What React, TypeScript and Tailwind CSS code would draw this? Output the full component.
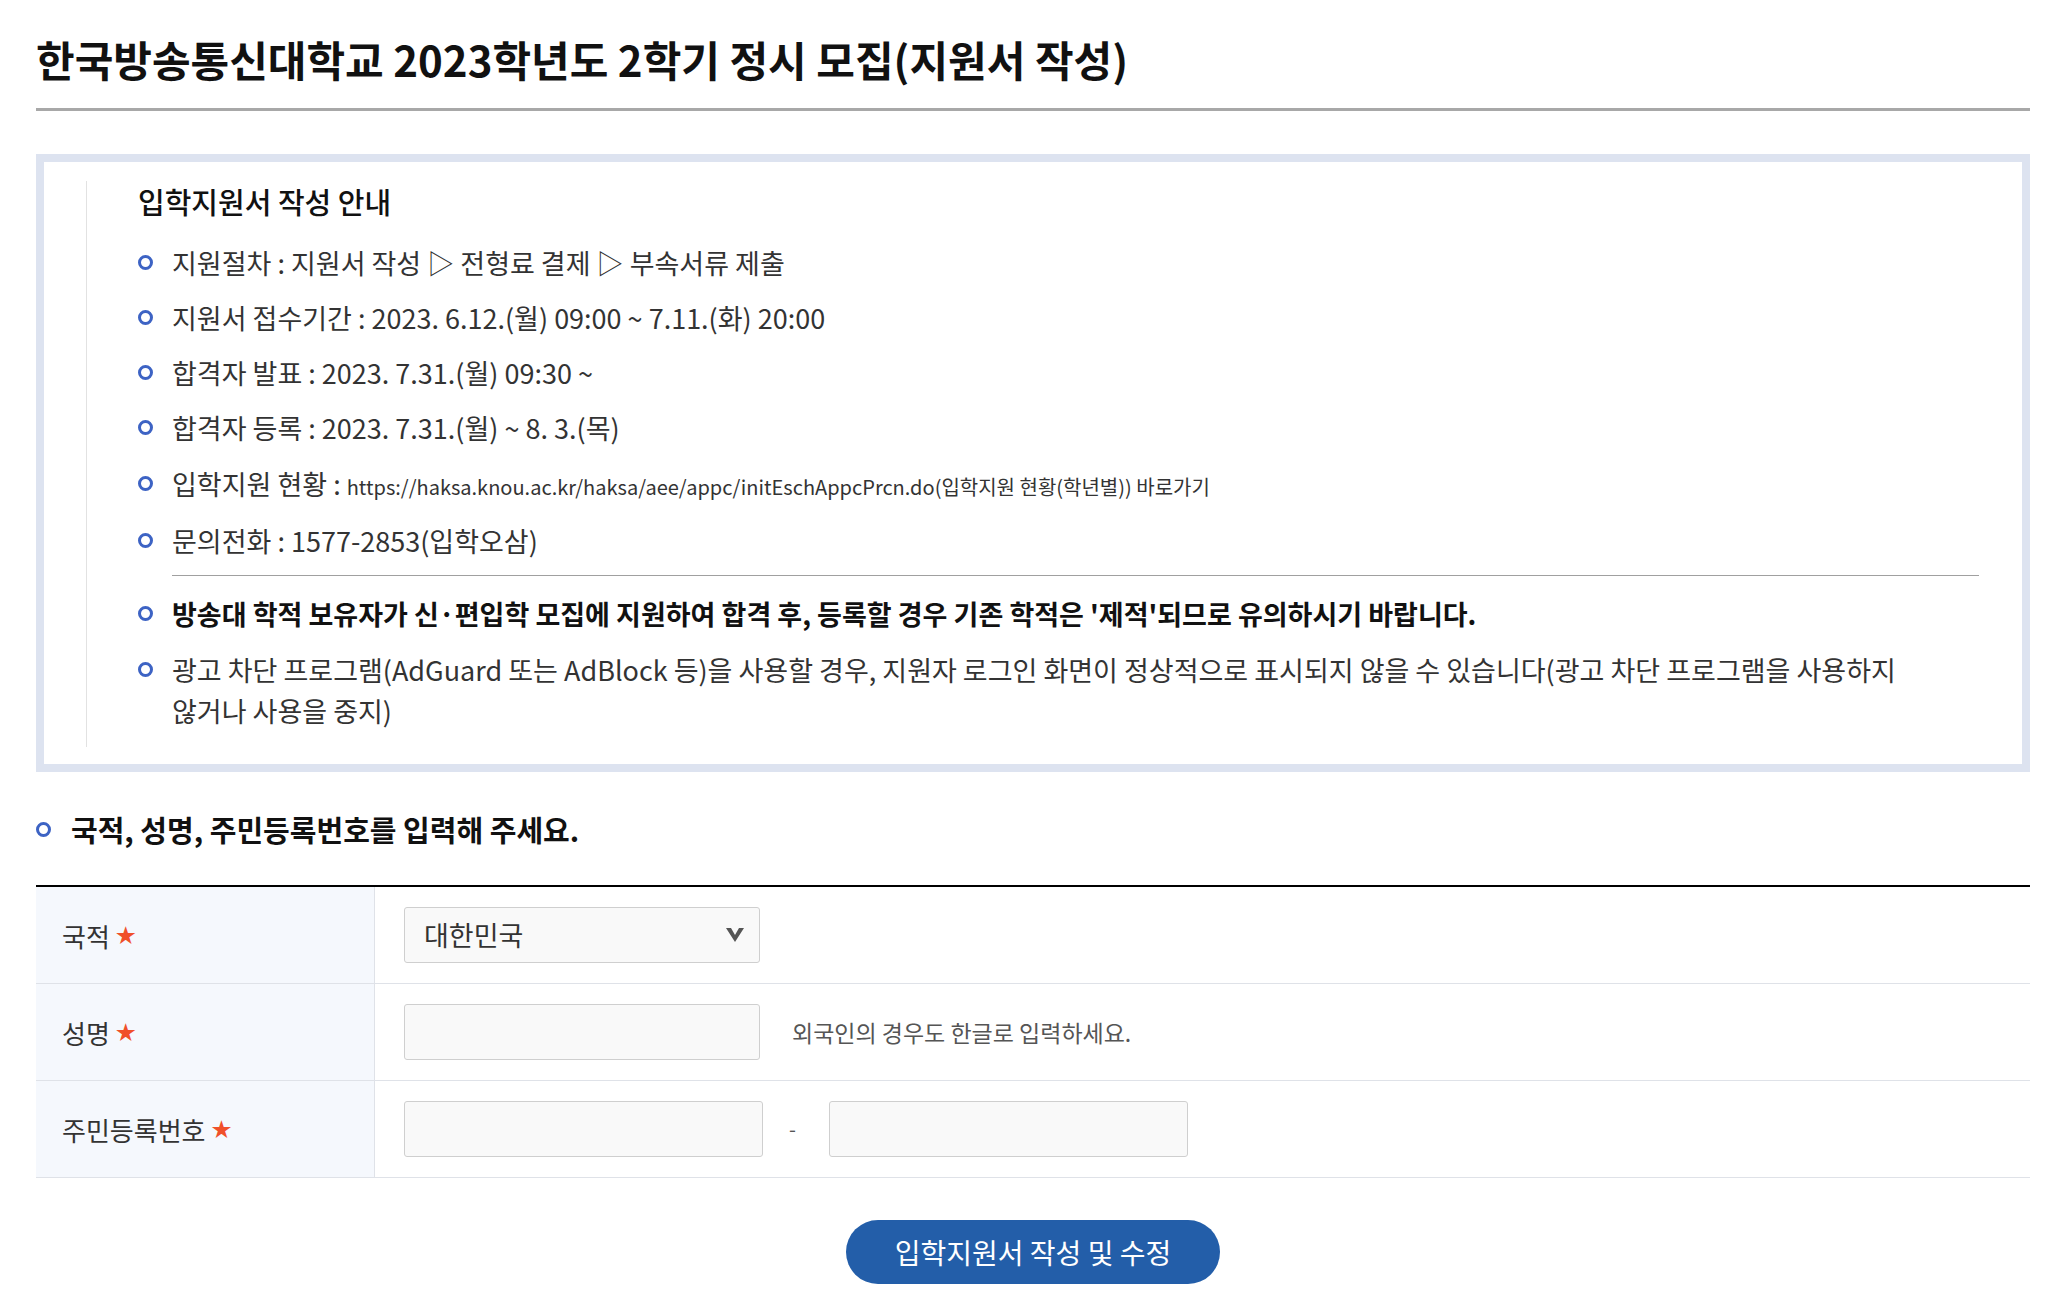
const font = { fontFamily: '"Noto Sans CJK KR", "Noto Sans", sans-serif' };

const Bullet = () => (
    <span className="mt-[13px] h-[15px] w-[15px] shrink-0 rounded-full border-[3px] border-[#3d63c4]" />
);

const infoItems = [
    "지원절차 : 지원서 작성 ▷ 전형료 결제 ▷ 부속서류 제출",
    "지원서 접수기간 : 2023. 6.12.(월) 09:00 ~ 7.11.(화) 20:00",
    "합격자 발표 : 2023. 7.31.(월) 09:30 ~",
    "합격자 등록 : 2023. 7.31.(월) ~ 8. 3.(목)",
];

const Star = () => <span className="ml-[6px] text-[20px] text-[#f0502a]">★</span>;

const SelectArrow = () => (
    <svg width="18" height="14" viewBox="0 0 18 14" className="text-[#555]">
        <polygon points="0,0 5,0 9,7 13,0 18,0 9,14" fill="currentColor" />
    </svg>
);

const App = () => {
    return (
        <div style={font} className="min-h-screen bg-white pl-[36px] pr-[33px] text-[#222]">
            <h1 className="border-b-[3px] border-[#a8a8a8] pt-[32px] pb-[23px] text-[42px] font-bold leading-[53px] text-[#111]">
                한국방송통신대학교 2023학년도 2학기 정시 모집(지원서 작성)
            </h1>

            {/* 안내 박스 */}
            <div className="mt-[43px] border-[8px] border-[#dde3f0] pl-[42px] pr-[43px] pt-[19px] pb-[17px]">
                <div className="border-l border-[#e2e2e2] pl-[51px] pb-[16px]">
                    <h2 className="text-[29px] font-medium leading-[40px] text-[#111]">입학지원서 작성 안내</h2>
                    <ul className="mt-[21px] flex flex-col gap-[14px] text-[27px] leading-[41px] text-[#333]">
                        {infoItems.map((t) => (
                            <li key={t} className="flex gap-[19px]">
                                <Bullet />
                                <span>{t}</span>
                            </li>
                        ))}
                        <li className="mt-[1px] flex gap-[19px]">
                            <Bullet />
                            <span>
                                입학지원 현황 :{" "}
                                <span className="text-[20px] leading-none">
                                    https://haksa.knou.ac.kr/haksa/aee/appc/initEschAppcPrcn.do(입학지원 현황(학년별)) 바로가기
                                </span>
                            </span>
                        </li>
                        <li className="mt-[2px] flex gap-[19px]">
                            <Bullet />
                            <span>문의전화 : 1577-2853(입학오삼)</span>
                        </li>
                    </ul>
                    <div className="mt-[14px] ml-[34px] border-t border-[#a0a0a0]" />
                    <ul className="mt-[17px] flex flex-col gap-[15px] text-[27px] leading-[41px] text-[#333]">
                        <li className="flex gap-[19px]">
                            <Bullet />
                            <span className="font-bold text-[#111]">
                                방송대 학적 보유자가 신·편입학 모집에 지원하여 합격 후, 등록할 경우 기존 학적은 '제적'되므로 유의하시기 바랍니다.
                            </span>
                        </li>
                        <li className="flex gap-[19px]">
                            <Bullet />
                            <span>
                                광고 차단 프로그램(AdGuard 또는 AdBlock 등)을 사용할 경우, 지원자 로그인 화면이 정상적으로 표시되지 않을 수 있습니다(광고 차단 프로그램을 사용하지
                                <br />
                                않거나 사용을 중지)
                            </span>
                        </li>
                    </ul>
                </div>
            </div>

            {/* 입력 안내 */}
            <div className="mt-[38px] flex items-center gap-[20px]">
                <span className="h-[15px] w-[15px] shrink-0 rounded-full border-[3px] border-[#3d63c4]" />
                <h3 className="text-[29px] font-bold leading-[38px] text-[#111]">국적, 성명, 주민등록번호를 입력해 주세요.</h3>
            </div>

            <div className="mt-[37px] border-t-2 border-black text-[26px]">
                <div className="flex h-[97px] border-b border-[#dfe2e8]">
                    <div className="flex w-[339px] shrink-0 items-center border-r border-[#dfe2e8] bg-[#f5f8fd] pl-[26px] text-[#333]">
                        국적
                        <Star />
                    </div>
                    <div className="flex items-center pl-[29px]">
                        <div className="flex h-[56px] w-[356px] items-center justify-between rounded-[3px] border border-[#cfcfcf] bg-[#f9f9f9] pl-[19px] pr-[15px] text-[27px] text-[#333]">
                            <span>대한민국</span>
                            <SelectArrow />
                        </div>
                    </div>
                </div>
                <div className="flex h-[97px] border-b border-[#dfe2e8]">
                    <div className="flex w-[339px] shrink-0 items-center border-r border-[#dfe2e8] bg-[#f5f8fd] pl-[26px] text-[#333]">
                        성명
                        <Star />
                    </div>
                    <div className="flex items-center gap-[32px] pl-[29px]">
                        <div className="h-[56px] w-[356px] rounded-[3px] border border-[#cfcfcf] bg-[#f9f9f9]" />
                        <span className="text-[23px] text-[#555]">외국인의 경우도 한글로 입력하세요.</span>
                    </div>
                </div>
                <div className="flex h-[97px] border-b border-[#dfe2e8]">
                    <div className="flex w-[339px] shrink-0 items-center border-r border-[#dfe2e8] bg-[#f5f8fd] pl-[26px] text-[#333]">
                        주민등록번호
                        <Star />
                    </div>
                    <div className="flex items-center pl-[29px]">
                        <div className="h-[56px] w-[359px] rounded-[3px] border border-[#cfcfcf] bg-[#f9f9f9]" />
                        <span className="w-[66px] pl-[26px] text-[20px] text-[#555]">-</span>
                        <div className="h-[56px] w-[359px] rounded-[3px] border border-[#cfcfcf] bg-[#f9f9f9]" />
                    </div>
                </div>
            </div>

            <div className="mt-[42px] flex justify-center pb-[8px]">
                <button
                    type="button"
                    className="flex h-[64px] w-[374px] items-center justify-center rounded-full bg-[#235ea9] text-[28px] text-white"
                >
                    입학지원서 작성 및 수정
                </button>
            </div>
        </div>
    );
};

export default App;
